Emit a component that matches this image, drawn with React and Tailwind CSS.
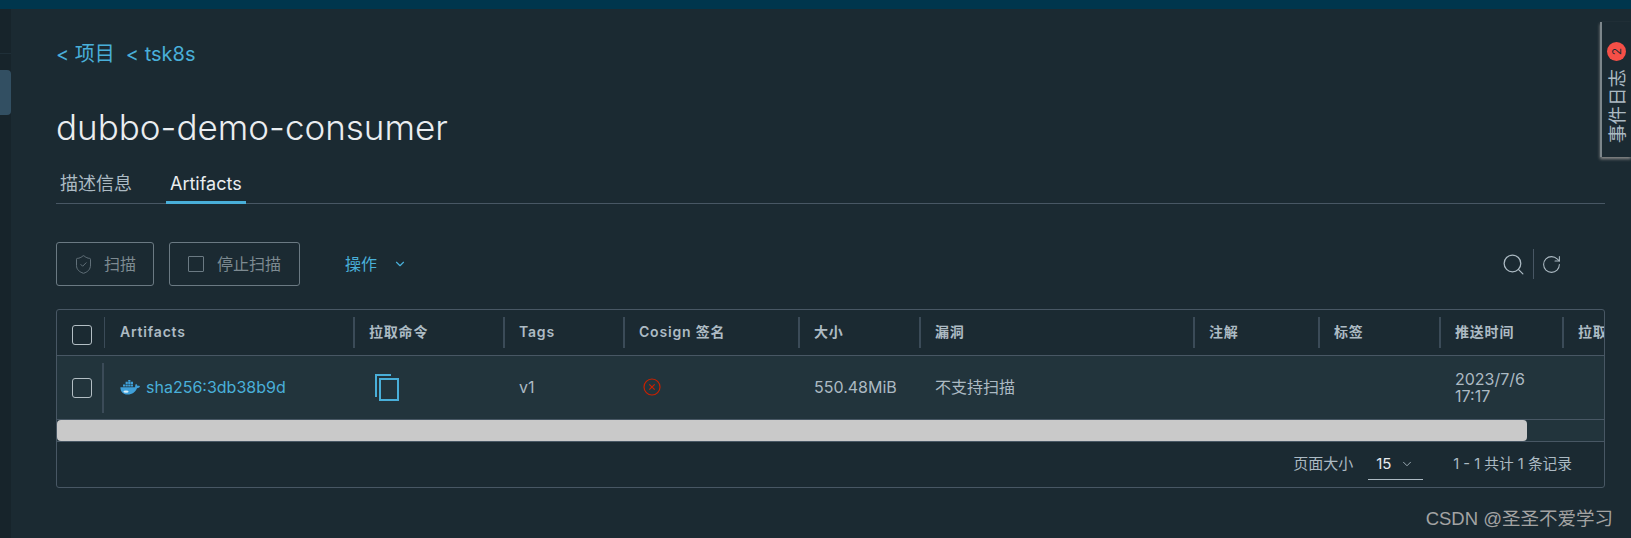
import { Search, RotateCw, ChevronDown, ShieldCheck } from "lucide-react";

const FONT = "font-['Inter','Noto_Sans_CJK_SC',sans-serif]";

const COLUMNS = [
  { label: "Artifacts", width: "w-[250px] pl-[15px]" },
  { label: "拉取命令", width: "w-[150px] pl-[14px]" },
  { label: "Tags", width: "w-[120px] pl-[14px]" },
  { label: "Cosign 签名", width: "w-[175px] pl-[14px]" },
  { label: "大小", width: "w-[121px] pl-[14px]" },
  { label: "漏洞", width: "w-[274px] pl-[14px]" },
  { label: "注解", width: "w-[125px] pl-[14px]" },
  { label: "标签", width: "w-[121px] pl-[14px]" },
  { label: "推送时间", width: "w-[123px] pl-[14px]" },
  { label: "拉取时间", width: "w-[120px] pl-[14px]" },
];

function Checkbox() {
  return <div className="w-5 h-5 shrink-0 rounded-[3px] border border-[#b3bec4]" />;
}

function CopyIcon() {
  return (
    <svg width="24" height="27" viewBox="0 0 24 27" fill="none" stroke="#49afd9" strokeWidth="2">
      <path d="M1 23V1h15" />
      <rect x="5" y="5" width="18" height="21" />
    </svg>
  );
}

function Cross() {
  return (
    <svg width="18" height="18" viewBox="0 0 18 18" fill="none" stroke="#c92100" strokeWidth="1.2">
      <circle cx="9" cy="9" r="8" />
      <path d="M6.3 6.3l5.4 5.4M11.7 6.3l-5.4 5.4" />
    </svg>
  );
}

function DockerIcon() {
  return (
    <svg width="20" height="15" viewBox="0 0 20 15" fill="#3f9fd8" className="shrink-0">
      <path d="M.4 7.2h14.8c-.2-1.4.2-2.6.8-3.4.8.5 1.4 1.4 1.4 2.2.8-.3 1.8-.2 2.6.3-.6 1.4-1.8 1.9-3 1.9-1.4 3.6-4.5 6.3-9.5 6.3C3 14.5.4 11.5.4 7.2z" />
      <path d="M3 4.4h2.2v2.2H3zM5.6 4.4h2.2v2.2H5.6zM8.2 4.4h2.2v2.2H8.2zM10.8 4.4H13v2.2h-2.2zM5.6 1.8h2.2V4H5.6zM8.2 1.8h2.2V4H8.2zM10.8 1.8H13V4h-2.2zM8.2 0h2.2v1.5H8.2z" />
      <ellipse cx="6" cy="11.6" rx="2.6" ry="1.2" fill="#d8eef8" />
    </svg>
  );
}

function Sidebar() {
  return (
    <div className="w-[11px] shrink-0 bg-[#17242b] flex flex-col">
      <div className="h-[45px] border-b border-[#1f2f38]" />
      <div className="h-[45px] mt-[16px] rounded-r-[4px] bg-[#324f62]" />
    </div>
  );
}

function Toolbar() {
  return (
    <div className="flex items-center mt-[38px] h-[44px]">
      <button className="h-[44px] w-[98px] flex items-center pl-[16px] gap-[10px] rounded-[3px] border border-[#6b7a83] text-[16px] text-[#7d8a91]">
        <ShieldCheck size={21} strokeWidth={1} className="text-[#6b7a83]" />
        扫描
      </button>
      <button className="h-[44px] w-[131px] ml-[15px] flex items-center pl-[18px] gap-[13px] rounded-[3px] border border-[#6b7a83] text-[16px] text-[#7d8a91]">
        <span className="w-[16px] h-[16px] border border-[#6b7a83] rounded-[1px]" />
        停止扫描
      </button>
      <div className="flex items-center ml-[45px] text-[16px] text-[#49afd9]">
        操作
        <ChevronDown size={14} strokeWidth={2} className="ml-[16px]" />
      </div>
      <div className="flex items-center ml-auto mr-[43px] text-[#acbac3]">
        <Search size={25} strokeWidth={1.2} />
        <div className="w-[1px] h-[30px] bg-[#485764] mx-[7px]" />
        <RotateCw size={21} strokeWidth={1.2} />
      </div>
    </div>
  );
}

function Table() {
  return (
    <div className="mt-[23px] h-[179px] rounded-[3px] border border-[#485764] overflow-hidden flex flex-col">
      <div className="h-[46px] shrink-0 flex items-center border-b border-[#485764]">
        <div className="w-[48px] shrink-0 pl-[15px] pt-[5px] flex items-center justify-between h-[31px]">
          <Checkbox />
          <div className="w-[1px] h-[31px] -mt-[5px] bg-[#3b4b58]" />
        </div>
        {COLUMNS.map((col) => (
          <div key={col.label} className={`${col.width} shrink-0 h-[31px] flex items-center whitespace-nowrap text-[14px] tracking-[0.8px] font-semibold text-[#adbbc4]`}>
            <span className="mb-[2px]">{col.label}</span>
            <div className="ml-auto w-[2px] h-[31px] bg-[#3b4b58]" />
          </div>
        ))}
      </div>
      <div className="h-[64px] shrink-0 flex items-center bg-[#22343c] border-b border-[#485764] text-[16px] text-[#acbac3]">
        <div className="w-[48px] shrink-0 pl-[15px] h-[50px] flex items-center justify-between pt-[1px]">
          <Checkbox />
          <div className="w-[2px] h-[50px] mr-[1px] bg-[#3b4b58]" />
        </div>
        <div className="w-[250px] shrink-0 pl-[15px] flex items-center gap-[6px] text-[#49afd9]">
          <DockerIcon />
          <span className="mb-[1px]">sha256:3db38b9d</span>
        </div>
        <div className="w-[150px] shrink-0 pl-[20px]">
          <CopyIcon />
        </div>
        <div className="w-[120px] shrink-0 pl-[14px] mb-[1px]">v1</div>
        <div className="w-[175px] shrink-0 pl-[18px] mb-[1px]">
          <Cross />
        </div>
        <div className="w-[121px] shrink-0 pl-[14px] mb-[1px]">550.48MiB</div>
        <div className="w-[274px] shrink-0 pl-[14px] mb-[1px]">不支持扫描</div>
        <div className="w-[125px] shrink-0" />
        <div className="w-[121px] shrink-0" />
        <div className="w-[123px] shrink-0 pl-[14px] leading-[17px]">
          2023/7/6
          <br />
          17:17
        </div>
      </div>
      <div className="h-[22px] shrink-0 bg-[#22343c] border-b border-[#485764]">
        <div className="h-[21px] w-[1470px] rounded-[4px] bg-[#c9c9c9]" />
      </div>
      <div className="flex-1 flex items-center justify-end pr-[32px] text-[15px] text-[#acbac3]">
        页面大小
        <div className="ml-[15px] w-[55px] h-[30px] pl-[8px] pr-[9px] flex items-center justify-between border-b border-[#acbac3] text-[15px] text-[#e9ecef]">
          15
          <ChevronDown size={14} strokeWidth={1.5} className="text-[#acbac3]" />
        </div>
        <span className="ml-[30px] text-[14.7px]">1 - 1 共计 1 条记录</span>
      </div>
    </div>
  );
}

export default function App() {
  return (
    <div className={`w-[1631px] h-[538px] overflow-hidden relative bg-[#1b2a32] flex flex-col ${FONT}`}>
      <div className="h-[9px] shrink-0 bg-[#00364d]" />
      <div className="flex-1 flex min-h-0">
        <Sidebar />
        <div className="flex-1 min-w-0 pl-[45px] pr-[26px]">
          <div className="mt-[33px] flex gap-[11px] text-[20px] leading-[24px] text-[#49afd9]">
            <span>&lt; 项目</span>
            <span>&lt; tsk8s</span>
          </div>
          <h1 className="mt-[39px] text-[35px] leading-[44px] font-light text-[#eaedf0]">dubbo-demo-consumer</h1>
          <div className="mt-[20px] h-[35px] flex border-b border-[#485764] text-[18px]">
            <div className="px-[4px] pt-[1px] text-[#acbac3]">描述信息</div>
            <div className="ml-[30px] px-[4px] pt-[1px] h-[35px] border-b-[3px] border-[#49afd9] text-[#eaedf0]">Artifacts</div>
          </div>
          <Toolbar />
          <Table />
        </div>
      </div>
      <div className="absolute right-0 top-[22px] w-[31px] h-[135px] border-l-2 border-[#7c868b] shadow-[0_2px_3px_#8a8a8a] flex flex-col items-center bg-[#1b2a32]">
        <div className="mt-[20px] w-[19px] h-[19px] rounded-full bg-[#f54f47] flex items-center justify-center text-[12px] text-[#1b2a32] -rotate-90">2</div>
        <div className="mt-[8px] text-[18.5px] leading-[20px] text-[#acbac3] [writing-mode:vertical-rl] [text-orientation:sideways] rotate-180">事件日志</div>
      </div>
      <div className="absolute right-[18px] top-[509px] text-[18.5px] leading-[20px] text-[#a3a3a3] font-['Liberation_Sans','Noto_Sans_CJK_SC',sans-serif]">CSDN @圣圣不爱学习</div>
    </div>
  );
}
